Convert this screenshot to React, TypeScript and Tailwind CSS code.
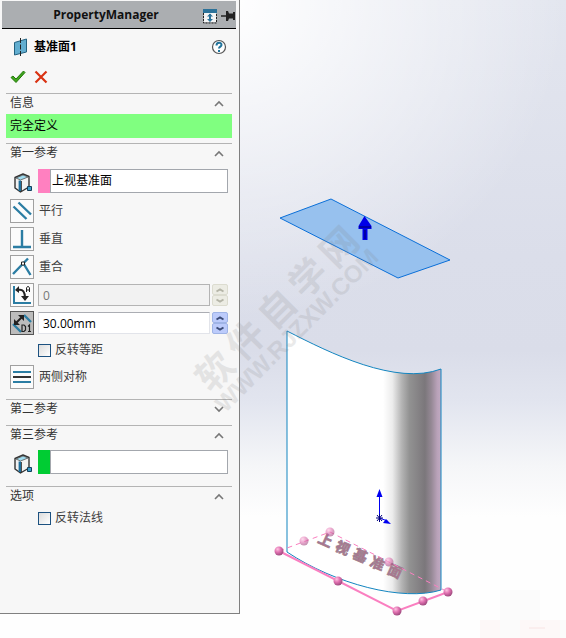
import React, { useState } from 'react'

type SectionProps = {
  title: string
  defaultOpen?: boolean
  className?: string
  children?: React.ReactNode
}

function Section({ title, defaultOpen = true, className = '', children }: SectionProps) {
  const [open, setOpen] = useState(defaultOpen)

  return (
    <section className="border-t border-[#b4b4b4]">
      <h2>
        <button
          type="button"
          aria-expanded={open}
          onClick={() => setOpen(!open)}
          className="flex h-5 w-full items-start justify-between pl-1 pr-2 leading-[18px] text-[#333]"
        >
          <span>{title}</span>
          <svg width="10" height="20" viewBox="0 0 10 20" fill="none" stroke="#777" strokeWidth="1.600">
            <path d={open ? 'M1 12l4-4 4 4' : 'M1 7l4 4 4-4'} />
          </svg>
        </button>
      </h2>
      {open && <div className={className}>{children}</div>}
    </section>
  )
}

function ReferenceIcon() {
  return (
    <svg width="18" height="20" viewBox="0 0 18 20" strokeLinejoin="round">
      <path d="M1 4.500L9 1l6 2.500V14l-8.500 5L1 15z" fill="#f2f2f2" stroke="#333" strokeWidth="1.400" />
      <path d="M2 5l7-3 5 2-7.500 3z" fill="#9fdcf0" stroke="#555" strokeWidth="0.800" />
      <path d="M5.800 7.500V18" stroke="#1f6f9c" strokeWidth="2.400" />
      <path d="M7.500 8v10" stroke="#222" strokeWidth="0.800" />
      <rect x="13.500" y="13.500" width="4" height="4" fill="#3a9ecb" stroke="#123f5c" />
    </svg>
  )
}

function SelectionBox({ label, color, value }: { label: string; color: string; value: string }) {
  return (
    <div className="flex items-center pl-2 pr-1">
      <div className="flex w-6 pt-1">
        <ReferenceIcon />
      </div>
      <div className={`h-6 w-3 ${color}`} />
      <input
        aria-label={label}
        readOnly
        defaultValue={value}
        className="h-6 min-w-0 flex-1 border border-[#a3a7ad] bg-white px-px pb-0.5 text-black outline-none"
      />
    </div>
  )
}

function Spinner({ disabled = false }: { disabled?: boolean }) {
  const style = disabled
    ? 'border-[#dcdcd0] bg-[#ecece4] text-[#b5b5a8]'
    : 'border-[#9fb4e6] bg-[#bccbfb] text-[#3c4c78]'

  return (
    <div className="flex w-4 flex-col">
      <button type="button" aria-label="+" disabled={disabled} className={`flex h-[11px] items-center justify-center rounded-xs border ${style}`}>
        <svg width="10" height="6" viewBox="0 0 10 6" fill="none" stroke="currentColor" strokeWidth="2">
          <path d="M1.500 4.500l3.500-2 3.500 2" />
        </svg>
      </button>
      <button type="button" aria-label="-" disabled={disabled} className={`flex h-[11px] items-center justify-center rounded-xs border ${style}`}>
        <svg width="10" height="6" viewBox="0 0 10 6" fill="none" stroke="currentColor" strokeWidth="2">
          <path d="M1.500 1.500l3.500 2 3.500-2" />
        </svg>
      </button>
    </div>
  )
}

type ToolProps = {
  id: string
  label: string
  pressed?: boolean
  children: React.ReactNode
}

function ToolButton({ id, label, pressed = false, children }: ToolProps) {
  return (
    <button
      type="button"
      id={id}
      aria-label={label}
      aria-pressed={pressed}
      className={`flex size-6 shrink-0 items-center justify-center border ${
        pressed ? 'border-[#555] bg-[#bcbcbc]' : 'border-[#a0a0a0] bg-[#fbfbfb]'
      }`}
    >
      <svg width="22" height="22" viewBox="0 0 22 22" fill="none" stroke="#2b7da3" strokeWidth="2">
        {children}
      </svg>
    </button>
  )
}

function Tool(props: ToolProps) {
  return (
    <div className="flex items-center gap-[5px] pl-1">
      <ToolButton {...props} />
      <label htmlFor={props.id}>{props.label}</label>
    </div>
  )
}

function CheckRow({ label }: { label: string }) {
  return (
    <label className="flex h-[14px] items-center gap-1 pl-8">
      <input
        type="checkbox"
        className="size-[13px] appearance-none border border-[#1c5180] bg-linear-to-br from-[#dcdcdc] to-white checked:bg-[#1c5180]"
      />
      {label}
    </label>
  )
}

function PropertyManager() {
  return (
    <aside className="h-[614px] w-60 shrink-0 border-r border-b border-[#808080] bg-[#f7f7f7] pt-px pl-0.5 text-xs text-[#404040]">
      <header className="mr-[3px] flex h-7 items-center border-b border-black bg-[#abaeb1]">
        <h1 className="flex-1 pl-2 text-center font-bold text-[#111]">PropertyManager</h1>
        <div className="flex items-center pt-0.5">
          <svg width="16" height="16" viewBox="0 0 16 16" fill="none">
            <path d="M1 1h14v4H1z" fill="#2c7299" />
            <path d="M2 5h12v9H2z" fill="#f4f4f4" />
            <path d="M1.500 5v10h13V5" stroke="#222" strokeDasharray="2 1" />
            <path d="M8 6v7" stroke="#2c7299" strokeWidth="2" />
            <path d="M5 8.500L8 5.500l3 3zM5 11l3 3 3-3z" fill="#2c7299" />
          </svg>
          <svg width="16" height="12" viewBox="0 0 16 12" className="ml-0.5">
            <path d="M1 6h6" stroke="#222" strokeWidth="1.500" />
            <path d="M6 1h2l1 2.500h4V2h2v8h-2V8.500H9L8 11H6z" fill="#222" />
          </svg>
        </div>
      </header>

      <div className="mt-1 flex h-7 items-center pr-3 pl-3">
        <svg width="14" height="18" viewBox="0 0 14 18">
          <path d="M.5 4.500l12-3.500v13l-12 3z" fill="#62aed0" stroke="#24617f" />
          <path d="M6.500 0v18" stroke="#222" strokeDasharray="5 1.500" />
        </svg>
        <h2 className="ml-1.5 flex-1 font-bold text-black">基准面1</h2>
        <button type="button" aria-label="帮助">
          <svg width="16" height="16" viewBox="0 0 16 16" fill="none">
            <circle cx="8" cy="8" r="6.500" fill="#fff" stroke="#555" strokeWidth="1.200" />
            <path d="M5.500 6.500c0-3.500 5-3.500 5-.5 0 1.500-2.500 1.800-2.500 3.500" stroke="#21749c" strokeWidth="2" />
            <path d="M7 11h2v2H7z" fill="#21749c" />
          </svg>
        </button>
      </div>

      <div className="flex h-8 items-center gap-2 pl-2">
        <button type="button" aria-label="确定">
          <svg width="16" height="14" viewBox="0 0 16 14">
            <path d="M1 7.500l2-1.500 3 3L13.500 1l1.500 1.500L6 12.500z" fill="#3fa51c" stroke="#257a0d" />
          </svg>
        </button>
        <button type="button" aria-label="取消">
          <svg width="14" height="14" viewBox="0 0 14 14" fill="none">
            <path d="M1.500 1.500l11 11M12.500 1.500l-11 11" stroke="#d93212" strokeWidth="2.200" />
          </svg>
        </button>
      </div>

      <div className="mr-[7px] ml-1">
        <Section title="信息" className="pb-[5px]">
          <p className="bg-[#80ff80] pl-1 leading-6 text-black">完全定义</p>
        </Section>

        <Section title="第一参考" className="flex flex-col gap-1 pt-[5px] pb-2.5">
          <div className="mb-0.5">
            <SelectionBox label="第一参考" color="bg-[#ff80c0]" value="上视基准面" />
          </div>
          <Tool id="parallel" label="平行">
            <path d="M2.500 6.500l13 12.500M7.500 2.500L20 14.500" strokeWidth="2.400" />
          </Tool>
          <Tool id="perpendicular" label="垂直">
            <path d="M11 2v17M2 19h18" strokeWidth="2.400" />
          </Tool>
          <Tool id="coincident" label="重合">
            <path d="M2 18L17 2.500M12.500 7.500L19.500 19" strokeWidth="2.400" />
            <path d="M10.500 6h3v3h-3z" fill="#fff" stroke="#222" strokeWidth="1" />
          </Tool>

          <div className="flex items-center pr-1 pl-1">
            <ToolButton id="angle" label="角度">
              <path d="M3 2v17h17" />
              <path d="M7 6c5-1 7 2 7 8" stroke="#222" />
              <path d="M4 6l4-4v7zM10 12h8l-4 5z" fill="#222" stroke="none" />
              <path d="M15.500 8V4l1-1.500h1l1 1.500v4M15.500 6h3" stroke="#222" strokeWidth="1" />
            </ToolButton>
            <input
              aria-label="角度"
              disabled
              defaultValue="0"
              className="ml-1 h-[22px] min-w-0 flex-1 border border-[#b4b4b4] bg-[#f2f2f2] px-1 text-[#777]"
            />
            <div className="ml-0.5">
              <Spinner disabled />
            </div>
          </div>

          <div className="flex items-center pr-1 pl-1">
            <ToolButton id="distance" label="偏移距离" pressed>
              <path d="M2 12l8 8M13 3l7 7" strokeWidth="2.400" />
              <path d="M5 11l6-6" stroke="#222" />
              <path d="M3 7v6h6zM7 3h6v6z" fill="#222" stroke="none" />
              <path d="M11 13v6.500h2l1.500-1.500v-3.500L13 13zM17 14.500l1.500-1.500v6.500m-1.500 0h3" stroke="#222" strokeWidth="1.200" />
            </ToolButton>
            <input
              aria-label="偏移距离"
              defaultValue="30.00mm"
              className="ml-1 h-[22px] min-w-0 flex-1 border border-[#e2e4ea] border-t-[#abadb3] bg-white px-1 text-black outline-none"
            />
            <div className="ml-0.5">
              <Spinner />
            </div>
          </div>

          <div className="py-1">
            <CheckRow label="反转等距" />
          </div>
          <Tool id="midplane" label="两侧对称">
            <path d="M2 6h18M2 16h18" />
            <path d="M2 11h18" stroke="#333" />
          </Tool>
        </Section>

        <div className="pb-[5px]">
          <Section title="第二参考" defaultOpen={false} />
        </div>

        <Section title="第三参考" className="pt-1 pb-3">
          <SelectionBox label="第三参考" color="bg-[#00cc33]" value="" />
        </Section>

        <Section title="选项" className="pt-1">
          <CheckRow label="反转法线" />
        </Section>
      </div>
    </aside>
  )
}

const handles = [
  { x: 330, y: 532, faded: true },
  { x: 304, y: 541, faded: true },
  { x: 389, y: 562, faded: true },
  { x: 279, y: 551 },
  { x: 338, y: 581 },
  { x: 397, y: 611 },
  { x: 423, y: 601 },
  { x: 448, y: 592 },
]

function Scene() {
  return (
    <svg viewBox="240 0 326 638" className="h-auto w-full">
      <defs>
        <linearGradient id="face" x1="287" x2="442" y1="0" y2="0" gradientUnits="userSpaceOnUse">
          <stop offset="0" stopColor="#fff" />
          <stop offset="0.620" stopColor="#fff" />
          <stop offset="0.680" stopColor="#ececec" />
          <stop offset="0.740" stopColor="#b4b4b4" />
          <stop offset="0.790" stopColor="#929292" />
          <stop offset="0.890" stopColor="#7b777b" />
          <stop offset="0.930" stopColor="#948894" />
          <stop offset="0.970" stopColor="#b9a2b9" />
          <stop offset="1" stopColor="#c4adc4" />
        </linearGradient>
        <radialGradient id="ball" cx="0.350" cy="0.300" r="0.700">
          <stop offset="0" stopColor="#ffc4e2" />
          <stop offset="0.500" stopColor="#e070b0" />
          <stop offset="1" stopColor="#a04c80" />
        </radialGradient>
      </defs>

      <path d="M500 590h40v30h26v18h-66z" fill="#fbfbfb" />
      <path d="M480 620h20v18h-20zM520 620h40v18h-40z" fill="#fdf8f8" />
      <path d="M529 628h16" stroke="#f8e4e4" />

      <path d="M280 218l51-19 119 61-52 18z" fill="#97c1ee" stroke="#0a6fd8" />
      <path d="M364.500 216l7 10v3h-4v11h-5v-11h-4v-3z" fill="#0000e8" />
      <path d="M365 230v9M359 227h12" stroke="#000060" />

      <path
        d="M287 331C330 353 396 386 441 369V590C403 602 335 584 287 552z"
        fill="url(#face)"
        stroke="#1385c0"
      />

      <g fill="#b0708f" stroke="#9c8290" strokeWidth="0.800" fontSize="14" fontWeight="bold" transform="translate(317 542) rotate(24)">
        <text x="0 19 38 57 76" y="0">上视基准面</text>
      </g>

      <g fill="none" stroke="#fa7fc0">
        <path d="M279 551l51-19 118 60" strokeDasharray="5 4" />
        <path d="M279 551l118 60 51-19" strokeWidth="2" />
      </g>
      {handles.map((h) => (
        <circle key={`${h.x}-${h.y}`} cx={h.x} cy={h.y} r="4.500" fill="url(#ball)" opacity={h.faded ? 0.6 : 1} />
      ))}

      <g stroke="#0000f0" fill="#0000f0">
        <path d="M379.500 518V494M379.500 518l8 3" />
        <path d="M379.500 489l3 8h-6zM391 524l-8-1 3-4z" stroke="none" />
        <path d="M376 518h7M377 515l5 6M382 515l-5 6M379.500 514v8" stroke="#000080" />
      </g>
    </svg>
  )
}

function Watermark() {
  return (
    <svg
      aria-hidden="true"
      viewBox="0 0 566 638"
      className="pointer-events-none absolute inset-x-0 top-0 h-auto w-full"
      fill="#808080"
      opacity="0.160"
      fontWeight="bold"
    >
      <g transform="translate(214 371) rotate(-45)">
        <text x="-18 26 70 114 158" y="14" fontSize="37">软件自学网</text>
        <text x="-22" y="38" fontSize="24" className="font-['Liberation_Sans']">WWW.RJZXW.COM</text>
      </g>
    </svg>
  )
}

export default function App() {
  return (
    <div className="relative flex min-h-screen items-start bg-[radial-gradient(ellipse_60%_50%_at_40%_0%,#ffffff_0%,#ffffff00_100%),linear-gradient(to_bottom,#e3e6ef_0%,#dbdeea_40%,#dadde9_55%,#e2e5ef_63%,#f5f6f8_73%,#fefefe_81%)] font-['Open_Sans','Noto_Sans_CJK_SC',sans-serif]">
      <PropertyManager />
      <main className="min-w-0 flex-1">
        <Scene />
      </main>
      <Watermark />
    </div>
  )
}
